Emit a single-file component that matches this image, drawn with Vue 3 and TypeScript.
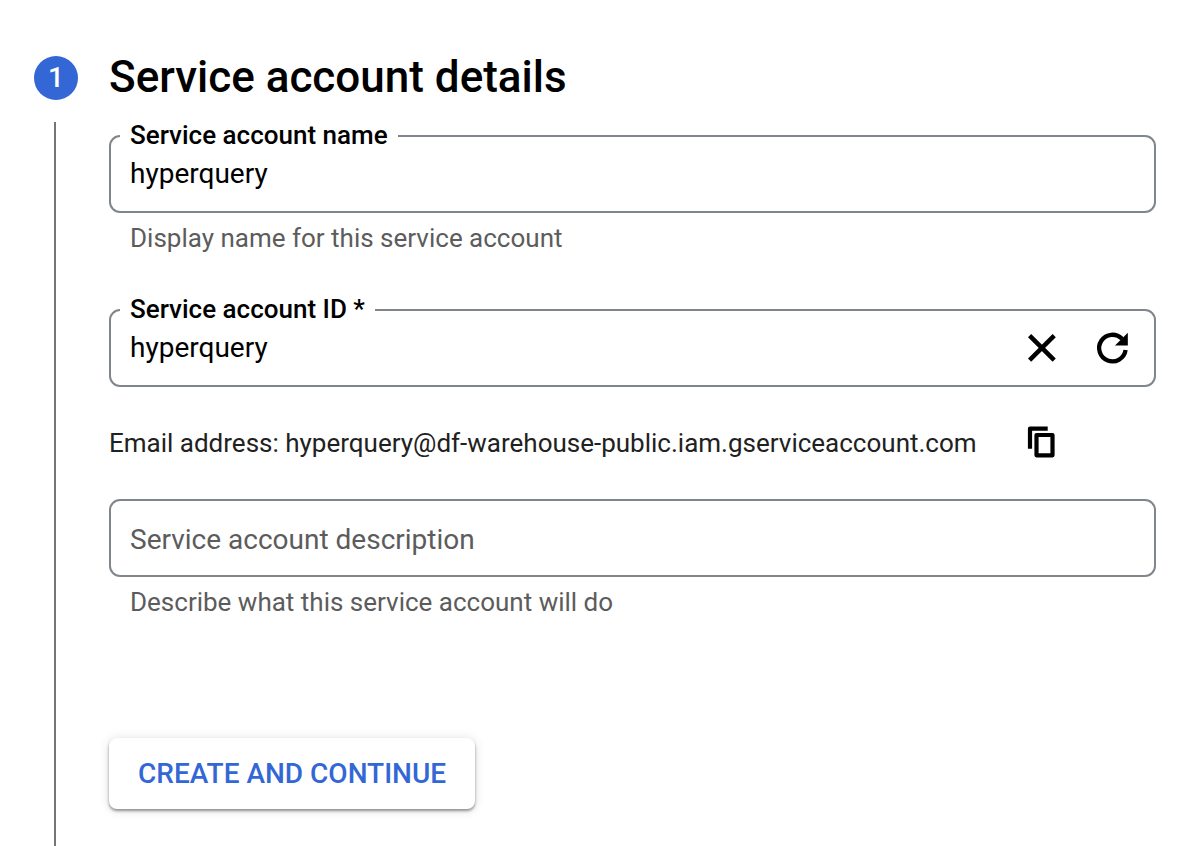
<script setup lang="ts">
import { ref } from 'vue'

const accountName = ref('hyperquery')
const accountId = ref('hyperquery')
const description = ref('')
const project = 'df-warehouse-public'

function clearId(): void {
  accountId.value = ''
}

function regenerateId(): void {
  accountId.value = accountName.value
}

function copyEmail(): void {
  navigator.clipboard?.writeText(`${accountId.value}@${project}.iam.gserviceaccount.com`)
}
</script>

<template>
  <main class="step">
    <div class="rail">
      <span class="badge">1</span>
      <span class="line"></span>
    </div>
    <form class="content" @submit.prevent>
      <h1 class="title">Service account details</h1>

      <div class="field">
        <div class="box">
          <label class="label" for="account-name">Service account name</label>
          <input id="account-name" v-model="accountName" class="input" type="text" aria-describedby="name-hint" />
        </div>
        <p id="name-hint" class="hint">Display name for this service account</p>
      </div>

      <div class="field">
        <div class="box">
          <label class="label" for="account-id">Service account ID *</label>
          <input id="account-id" v-model="accountId" class="input" type="text" />
          <button class="icon-button" type="button" aria-label="Clear" @click="clearId">
            <svg viewBox="0 0 40 40" fill="none" stroke="currentColor" stroke-width="4.5">
              <path d="M7.6 7.6 32.2 32.2M32.2 7.6 7.6 32.2" />
            </svg>
          </button>
          <button class="icon-button" type="button" aria-label="Regenerate" @click="regenerateId">
            <svg viewBox="0 0 40 40" fill="none">
              <path d="M33.6 22A13.300 13.300 0 1 1 30 10.800" stroke="currentColor" stroke-width="4.3" />
              <path d="M35.800 4.800V17.500H23Z" fill="currentColor" />
            </svg>
          </button>
        </div>
      </div>

      <div class="email">
        <span>Email address: {{ accountId }}@{{ project }}.iam.gserviceaccount.com</span>
        <button class="icon-button" type="button" aria-label="Copy email address" @click="copyEmail">
          <svg viewBox="0 0 40 40" fill="none" stroke="currentColor" stroke-width="4.2">
            <path d="M9 25.700V5.600H26.700" stroke-linejoin="round" />
            <rect x="15.500" y="12" width="16" height="20.300" stroke-linejoin="round" />
          </svg>
        </button>
      </div>

      <div class="field">
        <div class="box">
          <input v-model="description" class="input plain" type="text" placeholder="Service account description" aria-label="Service account description" aria-describedby="description-hint" />
        </div>
        <p id="description-hint" class="hint">Describe what this service account will do</p>
      </div>

      <button class="submit" type="submit">CREATE AND CONTINUE</button>
    </form>
  </main>
</template>

<style>
body {
  margin: 0;
  background: #fff;
}
</style>

<style scoped>
.step {
  box-sizing: border-box;
  display: flex;
  gap: 31px;
  min-height: 100vh;
  padding: 56px 44px 0 34px;
  font-family: Roboto, "Liberation Sans", sans-serif;
  color: #000;
}

.rail {
  display: flex;
  flex-direction: column;
  align-items: center;
  gap: 22px;
  width: 44px;
}

.badge {
  width: 44px;
  height: 44px;
  border-radius: 50%;
  background: #3367d6;
  color: #fff;
  font-size: 28px;
  font-weight: 500;
  line-height: 44px;
  text-align: center;
}

.line {
  flex: 1;
  width: 2px;
  margin-right: 2px;
  background: #757575;
}

.content {
  flex: 1;
  min-width: 0;
  padding-bottom: 36px;
}

.title {
  margin: 0 0 37px;
  font-size: 44px;
  font-weight: 500;
  line-height: 42px;
}

.box {
  box-sizing: border-box;
  position: relative;
  display: flex;
  align-items: center;
  gap: 30px;
  height: 78px;
  padding: 0 22px 0 19px;
  border: 2px solid #80868b;
  border-radius: 11px;
}

.label {
  position: absolute;
  top: -18px;
  left: 9px;
  padding: 0 10px;
  background: #fff;
  font-size: 26px;
  font-weight: 500;
  line-height: 32px;
}

.input {
  flex: 1;
  min-width: 0;
  height: 40px;
  padding: 0;
  border: 0;
  outline: 0;
  background: transparent;
  color: #000;
  font: 400 28px/40px Roboto, "Liberation Sans", sans-serif;
}

.plain {
  padding-top: 4px;
}

.input::placeholder {
  color: #5c5c5c;
  opacity: 1;
}

.hint {
  margin: 9px 0 0 21px;
  color: #5c5c5c;
  font-size: 26px;
  line-height: 32px;
}

.field + .field {
  margin-top: 55px;
}

.icon-button {
  width: 40px;
  height: 40px;
  padding: 0;
  border: 0;
  background: none;
  color: #000;
}

.icon-button svg {
  display: block;
}

.email {
  display: flex;
  align-items: center;
  gap: 44px;
  margin: 36px 0;
  color: #212121;
  font-size: 26px;
  line-height: 40px;
}

.submit {
  height: 71px;
  margin-top: 120px;
  padding: 0 29px;
  border: 0;
  border-radius: 8px;
  background: #fff;
  box-shadow: 0 2px 3px rgba(0, 0, 0, 0.4), 0 1px 12px rgba(0, 0, 0, 0.12);
  color: #3367d6;
  font: 500 28px/40px Roboto, "Liberation Sans", sans-serif;
}
</style>
